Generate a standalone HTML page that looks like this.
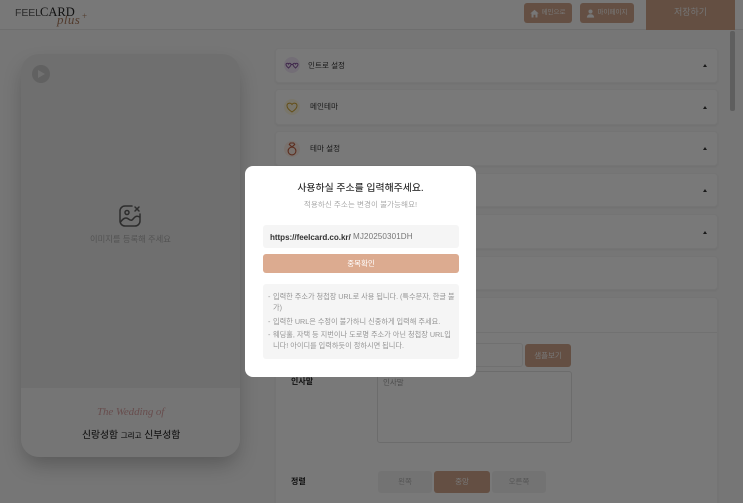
<!DOCTYPE html>
<html lang="ko"><head><meta charset="utf-8">
<style>
*{box-sizing:border-box;margin:0;padding:0}
html,body{width:743px;height:503px;overflow:hidden;background:#fff}
body{position:relative;font-family:"Liberation Sans","Noto Sans CJK KR",sans-serif}
.a{position:absolute;white-space:nowrap}
#page{position:absolute;inset:0;background:#ececec;filter:blur(.3px)}
.card{position:absolute;left:275px;width:443px;background:#f3f3f3;border:1px solid #e9e9e9;border-radius:4px;box-shadow:0 1px 2px rgba(0,0,0,.05)}
.lab{position:absolute;font-size:7.6px;color:#333;line-height:10px;white-space:nowrap}
.tri{position:absolute;left:703px;width:0;height:0;border-left:2.2px solid transparent;border-right:2.2px solid transparent;border-bottom:3px solid #333}
.btn{position:absolute;background:#c99f86;border-radius:3px;color:#eee;font-size:6.5px;line-height:18px;text-align:center;white-space:nowrap}
.ic{position:absolute;width:16px;height:16px;border-radius:50%}
#ov{position:absolute;inset:0;background:rgba(0,0,0,.5)}
#modal{position:absolute;left:245px;top:166px;width:231px;height:211px;background:#fff;border-radius:8px;filter:blur(.3px)}
#modal .a{line-height:1}
.info{position:absolute;left:28px;font-size:7.2px;color:#959595;line-height:11px;white-space:nowrap}
</style></head><body>
<div id="page">
  <!-- header -->
  <div class="a" style="left:0;top:0;width:743px;height:30px;background:#f1f1f1;border-bottom:1px solid #dcdcdc"></div>
  <div class="a" style="left:15px;top:7px;font:10.5px/12px 'Liberation Sans',sans-serif;color:#5a5a5a;letter-spacing:-.1px">FEEL</div>
  <div class="a" style="left:40px;top:6px;font:12.5px/13px 'Liberation Serif',serif;color:#222">CARD</div>
  <div class="a" style="left:57px;top:13px;font:italic 13px/14px 'Liberation Serif',serif;color:#a5765a;letter-spacing:.4px">plus</div>
  <div class="a" style="left:82px;top:12px;font:9px/9px 'Liberation Serif',serif;color:#a5765a">+</div>
  <div class="btn" style="left:524px;top:3px;width:48px;height:20px;line-height:20px;padding-left:11px">메인으로</div>
  <svg class="a" style="left:530px;top:9px" width="9" height="9" viewBox="0 0 10 10"><path d="M5 .8 .3 5h1.400v4.400h2.200V6.400h2.200v3h2.200V5h1.400z" fill="#eee"/></svg>
  <div class="btn" style="left:580px;top:3px;width:54px;height:20px;line-height:20px;padding-left:11px">마이페이지</div>
  <svg class="a" style="left:586px;top:9px" width="9" height="9" viewBox="0 0 10 10"><circle cx="5" cy="2.800" r="2.300" fill="#eee"/><path d="M1 9.600C1 6.800 2.800 5.800 5 5.800s4 1 4 3.800z" fill="#eee"/></svg>
  <div class="a" style="left:646px;top:0;width:89px;height:30px;background:#c89e84;color:#e9e9e9;font-size:9px;line-height:25px;text-align:center">저장하기</div>
  <!-- scrollbar -->
  <div class="a" style="left:730px;top:31px;width:5px;height:80px;background:#bcbcbc;border-radius:2px"></div>

  <!-- phone -->
  <div class="a" style="left:21px;top:54px;width:219px;height:403px;background:#dedede;border-radius:18px;box-shadow:0 10px 20px -3px rgba(0,0,0,.25);overflow:hidden">
    <div class="a" style="left:0;top:334px;width:219px;height:69px;background:#ebebeb"></div>
  </div>
  <div class="a" style="left:32px;top:65px;width:18px;height:18px;border-radius:50%;background:#c2c2c2"></div>
  <div class="a" style="left:38px;top:70px;width:0;height:0;border-left:7px solid #e0e0e0;border-top:4px solid transparent;border-bottom:4px solid transparent"></div>
  <svg class="a" style="left:118px;top:204px" width="24" height="24" viewBox="0 0 24 24" fill="none" stroke="#5a5a5a" stroke-width="1.500" stroke-linecap="round" stroke-linejoin="round"><path d="M14 2H7a5 5 0 0 0-5 5v10a5 5 0 0 0 5 5h10a5 5 0 0 0 5-5v-7"/><circle cx="9" cy="8.500" r="2"/><path d="M2.500 18c3-4 5.500-5 8-3s3.500 1.500 5-.5 3.500-3 6-1.500"/><path d="M17 3l4 4M21 3l-4 4"/></svg>
  <div class="a" style="left:90px;top:233px;font-size:8.300px;line-height:12px;color:#a6a6a6">이미지를 등록해 주세요</div>
  <div class="a" style="left:97px;top:405px;font:italic 11px/14px 'Liberation Serif',serif;color:#cf9a9a;letter-spacing:-.1px">The Wedding of</div>
  <div class="a" style="left:82px;top:429px;font-size:9.800px;line-height:14px;color:#222;-webkit-text-stroke:.1px #222">신랑성함 <span style="font-size:7.500px">그리고</span> 신부성함</div>

  <!-- accordion -->
  <div class="card" style="top:48px;height:35px"></div>
  <div class="card" style="top:89px;height:36px"></div>
  <div class="card" style="top:131px;height:35px"></div>
  <div class="card" style="top:173px;height:34px"></div>
  <div class="card" style="top:214px;height:35px"></div>
  <div class="card" style="top:256px;height:34px"></div>
  <div class="card" style="top:297px;height:230px"></div>
  <div class="a" style="left:276px;top:332px;width:441px;height:1px;background:#e2e2e2"></div>

  <div class="ic" style="left:284px;top:57px;background:#e6dcec"></div>
  <svg class="a" style="left:285px;top:62px" width="14" height="7" viewBox="0 0 14 7" fill="none" stroke="#7e4f96" stroke-width="1"><path d="M1 2.500C1 1 3 1 3.500 2 4 1 6 1 6 2.500 6 4 4 5.500 3.500 6 3 5.500 1 4 1 2.500ZM8 2.500C8 1 10 1 10.500 2 11 1 13 1 13 2.500 13 4 11 5.500 10.500 6 10 5.500 8 4 8 2.500ZM6 2.500H8"/></svg>
  <div class="lab" style="left:308px;top:61px">인트로 설정</div>
  <div class="tri" style="top:64px"></div>

  <div class="ic" style="left:284px;top:99px;background:#f3edd6"></div>
  <svg class="a" style="left:286px;top:102px" width="12" height="11" viewBox="0 0 12 11" fill="none" stroke="#c59a2e" stroke-width="1"><path d="M6 10C3 8 1 6 1 3.700 1 1 4.500.3 6 2.500 7.500.3 11 1 11 3.700 11 6 9 8 6 10Z"/></svg>
  <div class="lab" style="left:310px;top:102px">메인테마</div>
  <div class="tri" style="top:106px"></div>

  <div class="ic" style="left:284px;top:141px;background:#f2e4dc"></div>
  <svg class="a" style="left:287px;top:142px" width="10" height="14" viewBox="0 0 10 14" fill="none" stroke="#b8583a" stroke-width="1.100"><circle cx="5" cy="9" r="3.900"/><path d="M3.300 1h3.400l1 1.500L5 5 2.300 2.500z"/></svg>
  <div class="lab" style="left:310px;top:144px">테마 설정</div>
  <div class="tri" style="top:147px"></div>
  <div class="tri" style="top:189px"></div>
  <div class="tri" style="top:231px"></div>

  <!-- form -->
  <div class="a" style="left:377px;top:343px;width:146px;height:24px;border:1px solid #e0e0e0;border-radius:3px;background:#f3f3f3"></div>
  <div class="btn" style="left:525px;top:344px;width:46px;height:23px;line-height:23px;font-size:7.500px">샘플보기</div>
  <div class="a" style="left:291px;top:376px;font-size:8px;line-height:12px;color:#222;font-weight:700">인사말</div>
  <div class="a" style="left:377px;top:371px;width:195px;height:72px;border:1px solid #d8d8d8;border-radius:3px;background:#f3f3f3"></div>
  <div class="a" style="left:383px;top:377px;font-size:7.500px;line-height:12px;color:#999">인사말</div>
  <div class="a" style="left:291px;top:476px;font-size:8px;line-height:12px;color:#222;font-weight:700">정렬</div>
  <div class="a" style="left:378px;top:471px;width:54px;height:22px;border-radius:3px;background:#e6e6e6;color:#aaa;font-size:7.500px;line-height:22px;text-align:center">왼쪽</div>
  <div class="btn" style="left:434px;top:471px;width:56px;height:22px;line-height:22px;font-size:7.500px">중앙</div>
  <div class="a" style="left:492px;top:471px;width:54px;height:22px;border-radius:3px;background:#e6e6e6;color:#aaa;font-size:7.500px;line-height:22px;text-align:center">오른쪽</div>
</div>
<div id="ov"></div>
<div id="modal">
  <div class="a" style="left:0;width:231px;top:18px;text-align:center;font-size:9.900px;color:#222;-webkit-text-stroke:.1px #222">사용하실 주소를 입력해주세요.</div>
  <div class="a" style="left:0;width:231px;top:35px;text-align:center;font-size:7.600px;color:#aaa">적용하신 주소는 변경이 불가능해요!</div>
  <div class="a" style="left:18px;top:59px;width:196px;height:23px;background:#f5f5f5;border-radius:3px"></div>
  <div class="a" style="left:25px;top:68px;font-size:8.100px;color:#333;font-weight:700;letter-spacing:-.05px">https://feelcard.co.kr/</div>
  <div class="a" style="left:108px;top:67px;font-size:8.100px;color:#777;letter-spacing:.1px">MJ20250301DH</div>
  <div class="a" style="left:18px;top:88px;width:196px;height:19px;background:#dcab90;border-radius:3px;color:#fff;font-size:7.500px;line-height:19px!important;text-align:center">중복확인</div>
  <div class="a" style="left:18px;top:118px;width:196px;height:75px;background:#f5f5f5;border-radius:3px"></div>
  <div class="info" style="left:23px;top:125px">-</div>
  <div class="info" style="top:125px;letter-spacing:-.02px">입력한 주소가 청첩장 URL로 사용 됩니다. (특수문자, 한글 불</div>
  <div class="info" style="top:136px">가)</div>
  <div class="info" style="left:23px;top:150px">-</div>
  <div class="info" style="top:150px">입력한 URL은 수정이 불가하니 신중하게 입력해 주세요.</div>
  <div class="info" style="left:23px;top:163px">-</div>
  <div class="info" style="top:163px">웨딩홀, 자택 등 지번이나 도로명 주소가 아닌 청첩장 URL입</div>
  <div class="info" style="top:174px">니다! 아이디를 입력하듯이 정하시면 됩니다.</div>
</div>
</body></html>
